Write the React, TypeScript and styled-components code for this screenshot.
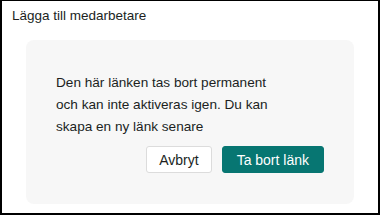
import React from 'react';
import styled, { createGlobalStyle } from 'styled-components';

const GlobalStyle = createGlobalStyle`
  html, body {
    margin: 0;
    padding: 0;
    background: #ffffff;
  }
  body {
    font-family: "Liberation Sans", Arial, sans-serif;
    color: #201f1e;
  }
`;

const Frame = styled.div`
  box-sizing: border-box;
  width: 380px;
  height: 215px;
  border: 2px solid #000000;
  border-top-width: 1px;
  padding: 6px 24px 9px 24px;
  display: flex;
  flex-direction: column;
`;

const Title = styled.div`
  font-size: 13.5px;
  line-height: 18px;
  margin-left: -14px;
  height: 33px;
`;

const Panel = styled.div`
  flex: 1;
  background: #f7f7f7;
  border-radius: 8px;
  padding: 32px 30px 31px 30px;
  display: flex;
  flex-direction: column;
`;

const Message = styled.p`
  margin: 0;
  max-width: 226px;
  font-size: 13.6px;
  line-height: 22px;
  color: #201f1e;
`;

const Actions = styled.div`
  margin-top: 8px;
  display: flex;
  justify-content: flex-end;
  gap: 10px;
`;

const Button = styled.button<{ $primary?: boolean }>`
  box-sizing: border-box;
  height: 27px;
  padding: 0 ${(p) => (p.$primary ? '14px' : '12px')};
  min-width: ${(p) => (p.$primary ? '102px' : '65px')};
  border-radius: 3px;
  font-family: "Liberation Sans", Arial, sans-serif;
  font-size: 14px;
  cursor: pointer;
  border: 1px solid ${(p) => (p.$primary ? '#077672' : '#dcdcdc')};
  background: ${(p) => (p.$primary ? '#077672' : '#ffffff')};
  color: ${(p) => (p.$primary ? '#ffffff' : '#201f1e')};
`;

export default function App() {
  return (
    <>
      <GlobalStyle />
      <Frame>
        <Title>Lägga till medarbetare</Title>
        <Panel>
          <Message>
            Den här länken tas bort permanent och kan inte aktiveras igen. Du kan skapa en ny länk senare
          </Message>
          <Actions>
            <Button>Avbryt</Button>
            <Button $primary>Ta bort länk</Button>
          </Actions>
        </Panel>
      </Frame>
    </>
  );
}
